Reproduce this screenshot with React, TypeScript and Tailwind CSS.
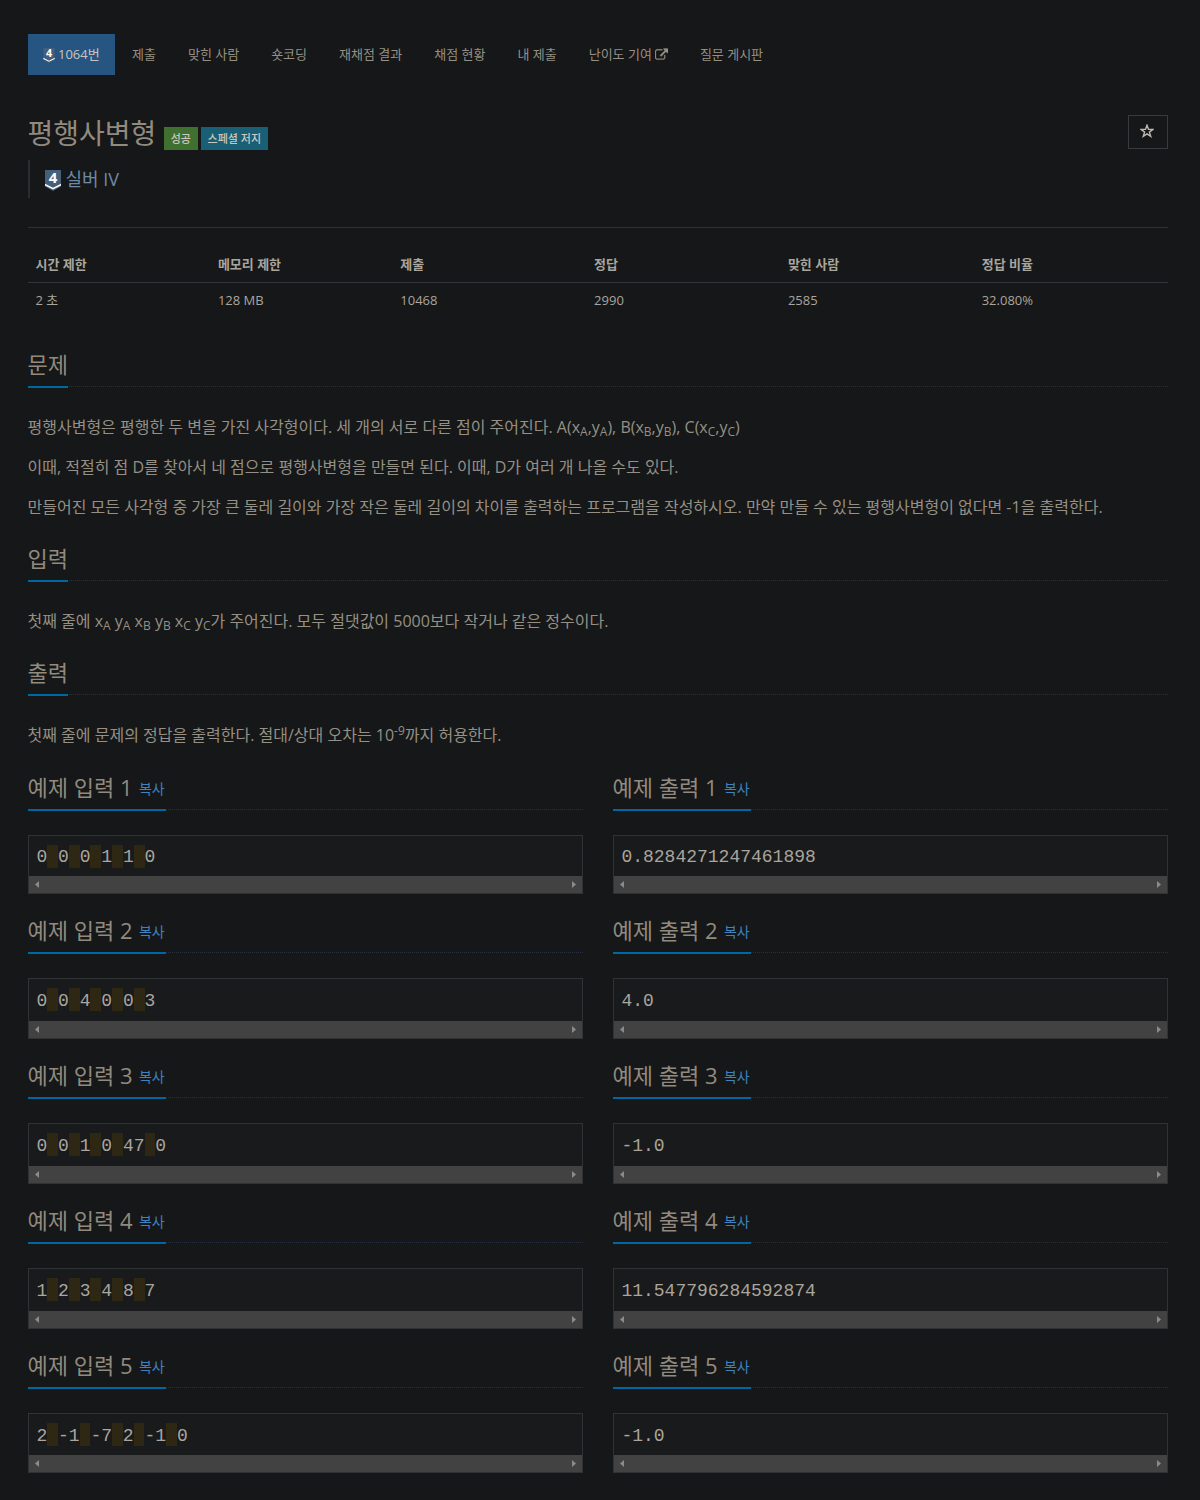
import type { ReactNode } from "react";

const menu = ["제출", "맞힌 사람", "숏코딩", "재채점 결과", "채점 현황", "내 제출"];

const stats = [
  { name: "시간 제한", value: "2 초" },
  { name: "메모리 제한", value: "128 MB" },
  { name: "제출", value: "10468" },
  { name: "정답", value: "2990" },
  { name: "맞힌 사람", value: "2585" },
  { name: "정답 비율", value: "32.080%" },
];

// the rows are not all equally tall, so each one has its own sizes
const samples = [
  { id: 1, input: "0 0 0 1 1 0", output: "0.8284271247461898", row: "h-[143px]", box: "h-[59px] leading-[25px]" },
  { id: 2, input: "0 0 4 0 0 3", output: "4.0", row: "h-[145px]", box: "h-[61px] leading-[27px]" },
  { id: 3, input: "0 0 1 0 47 0", output: "-1.0", row: "h-[145px]", box: "h-[61px] leading-[27px]" },
  { id: 4, input: "1 2 3 4 8 7", output: "11.547796284592874", row: "h-[145px]", box: "h-[61px] leading-[27px]" },
  { id: 5, input: "2 -1 -7 2 -1 0", output: "-1.0", row: "h-[145px]", box: "h-[60px] leading-[27px]" },
];

function TierIcon({ className }: { className: string }) {
  return (
    <svg viewBox="0 0 16 21" className={`shrink-0 overflow-visible ${className}`}>
      <path d="M0 0h16v16.5l-8 4.5-8-4.5z" fill="#435f7a" />
      <path d="M0 13.8l8 4 8-4v1.6l-8 4-8-4z" fill="#fff" />
      <text
        x="8"
        y="12.5"
        textAnchor="middle"
        fontFamily="Open Sans"
        fontWeight="700"
        fontSize="15"
        fill="#fff"
      >
        4
      </text>
    </svg>
  );
}

function ExternalIcon() {
  return (
    <svg viewBox="0 -1536 1792 1536" className="mb-px ml-[3px] h-3 w-[13px] fill-current stroke-current stroke-[40]">
      <path
        transform="scale(1 -1)"
        d="M1408 608v-320q0 -119 -84.5 -203.5t-203.5 -84.5h-832q-119 0 -203.5 84.5t-84.5 203.5v832q0 119 84.5 203.5t203.5 84.5h704q14 0 23 -9t9 -23v-64q0 -14 -9 -23t-23 -9h-704q-66 0 -113 -47t-47 -113v-832q0 -66 47 -113t113 -47h832q66 0 113 47t47 113v320q0 14 9 23t23 9h64q14 0 23 -9t9 -23zM1792 1472v-512q0 -26 -19 -45t-45 -19t-45 19l-176 176l-652 -652q-10 -10 -23 -10t-23 10l-114 114q-10 10 -10 23t10 23l652 652l-176 176q-19 19 -19 45t19 45t45 19h512q26 0 45 -19t19 -45z"
      />
    </svg>
  );
}

function Headline({ children, copy }: { children: ReactNode; copy?: boolean }) {
  return (
    <div className="flex h-[37px] border-b border-dotted border-[#263040]">
      <h2 className="flex h-[38px] border-b-2 border-[#0067a3] text-[22px] leading-[29px] whitespace-nowrap text-[#928a7e]">
        <span className="-ml-[0.5px]">{children}</span>
        {copy && (
          <a href="#" className="mr-px ml-[6.5px] text-[14px] leading-[32px] text-[#3f82c0]">
            복사
          </a>
        )}
      </h2>
    </div>
  );
}

function Sample({ text, box, marked }: { text: string; box: string; marked?: boolean }) {
  return (
    <div className={`mt-[25px] flex flex-col border border-[#303335] bg-[#181a1b] ${box}`}>
      <pre className="flex-1 overflow-hidden px-[7.4px] pt-[9px] font-['Liberation_Mono',monospace] text-[18px] text-[#aaa59d]">
        {marked
          ? text.split(" ").map((part, i) => (
              <span key={i}>
                {i > 0 && <span className="inline-block h-[22.5px] bg-[#2e2714] align-top"> </span>}
                {part}
              </span>
            ))
          : text}
      </pre>
      <div className="flex h-[17px] items-center justify-between bg-[#424242] px-[6px]">
        <svg viewBox="0 0 4 7" className="h-[7px] w-1 fill-[#8b8b8b]">
          <path d="M4 0v7L0 3.5z" />
        </svg>
        <svg viewBox="0 0 4 7" className="h-[7px] w-1 fill-[#8b8b8b]">
          <path d="M0 0v7l4-3.5z" />
        </svg>
      </div>
    </div>
  );
}

export default function App() {
  return (
    <div className="h-[1500px] overflow-hidden bg-[#151718] pt-[34px] pr-8 pl-7 font-['Open_Sans','Noto_Sans_CJK_KR',sans-serif] text-[13px] text-[#aaa59d]">
      <nav className="flex h-[41px] gap-[2px] leading-10 text-[#969084]">
        <a href="#" className="flex w-[87px] bg-[#265581] pl-[15px] whitespace-nowrap text-[#c9c5be]">
          <TierIcon className="mt-[14px] mr-[3px] h-[15px] w-3" />
          1064번
        </a>
        {menu.map((item) => (
          <a key={item} href="#" className="px-[15px]">
            {item}
          </a>
        ))}
        <a href="#" className="flex h-10 items-center px-[15px]">
          난이도 기여
          <ExternalIcon />
        </a>
        <a href="#" className="px-[15px]">
          질문 게시판
        </a>
      </nav>

      <div className="mt-10 flex h-[45px] justify-between">
        <div className="flex">
          <h1 className="-ml-[0.5px] text-[28px] leading-[36px] text-[#928a7e]">평행사변형</h1>
          <span className="mt-3 ml-[7.5px] h-[23px] w-[34px] bg-[#3f702f] text-center text-[11px] leading-[23px] font-medium text-[#cbc8c2]">성공</span>
          <span className="mt-3 ml-[3px] h-[23px] w-[67px] bg-[#195f75] text-center text-[11px] leading-[23px] font-medium text-[#cbc8c2]">스페셜 저지</span>
        </div>
        <button className="flex h-[34px] w-10 items-center justify-center border border-[#363b3d] pr-[2px] pb-[3px] text-[#bdb9b1]">
          <svg viewBox="0 0 14 14" className="h-[14px] w-[14px] fill-none stroke-current stroke-[1.4]">
            <path d="M7 1.2l1.5 4.2h4.4L9.4 8.1l1.3 4.2L7 9.8l-3.7 2.5 1.3-4.2-3.5-2.7h4.4z" />
          </svg>
        </button>
      </div>

      <blockquote className="flex h-[38px] items-center border-l-2 border-[#2a2d2f] pl-[15px] text-[18px] text-[#6f8aa5]">
        <TierIcon className="mt-[2px] mr-[4.5px] h-[21px] w-4" />
        실버 IV
      </blockquote>

      <hr className="mt-[29px] border-[#2f3234]" />

      <table className="mt-[19px] w-full table-fixed text-left">
        <thead>
          <tr className="h-[35px] border-b border-[#333638]">
            {stats.map((s, i) => (
              <th key={s.name} className={i < 2 ? "w-[16%] px-[7.5px] pt-px" : "w-[17%] px-[7.5px] pt-px"}>
                {s.name}
              </th>
            ))}
          </tr>
        </thead>
        <tbody>
          <tr className="h-9">
            {stats.map((s) => (
              <td key={s.name} className="px-[7.5px]">
                {s.value}
              </td>
            ))}
          </tr>
        </tbody>
      </table>

      <section className="mt-8 h-[194px]">
        <Headline>문제</Headline>
        <div className="mt-[25px] -ml-[0.5px] flex flex-col gap-[10px] text-[16px] leading-[30px] text-[#969084]">
          <p className="h-[30px]">
            평행사변형은 평행한 두 변을 가진 사각형이다. 세 개의 서로 다른 점이 주어진다. A(x<sub>A</sub>,y<sub>A</sub>), B(x
            <sub>B</sub>,y<sub>B</sub>), C(x<sub>C</sub>,y<sub>C</sub>)
          </p>
          <p className="h-[30px]">이때, 적절히 점 D를 찾아서 네 점으로 평행사변형을 만들면 된다. 이때, D가 여러 개 나올 수도 있다.</p>
          <p className="h-[30px]">
            만들어진 모든 사각형 중 가장 큰 둘레 길이와 가장 작은 둘레 길이의 차이를 출력하는 프로그램을 작성하시오. 만약 만들 수 있는 평행사변형이 없다면 -1을 출력한다.
          </p>
        </div>
      </section>

      <section className="h-[114px]">
        <Headline>입력</Headline>
        <p className="mt-[25px] -ml-[0.5px] text-[16px] leading-[30px] text-[#969084]">
          첫째 줄에 x<sub>A</sub> y<sub>A</sub> x<sub>B</sub> y<sub>B</sub> x<sub>C</sub> y<sub>C</sub>가 주어진다. 모두 절댓값이 5000보다 작거나 같은 정수이다.
        </p>
      </section>

      <section className="h-[115px]">
        <Headline>출력</Headline>
        <p className="mt-[25px] -ml-[0.5px] text-[16px] leading-[30px] text-[#969084]">
          첫째 줄에 문제의 정답을 출력한다. 절대/상대 오차는 10<sup>-9</sup>까지 허용한다.
        </p>
      </section>

      {samples.map((s) => (
        <div key={s.id} className={`grid grid-cols-2 gap-[30px] ${s.row}`}>
          <section>
            <Headline copy>예제 입력 {s.id}</Headline>
            <Sample text={s.input} box={s.box} marked />
          </section>
          <section>
            <Headline copy>예제 출력 {s.id}</Headline>
            <Sample text={s.output} box={s.box} />
          </section>
        </div>
      ))}
    </div>
  );
}
